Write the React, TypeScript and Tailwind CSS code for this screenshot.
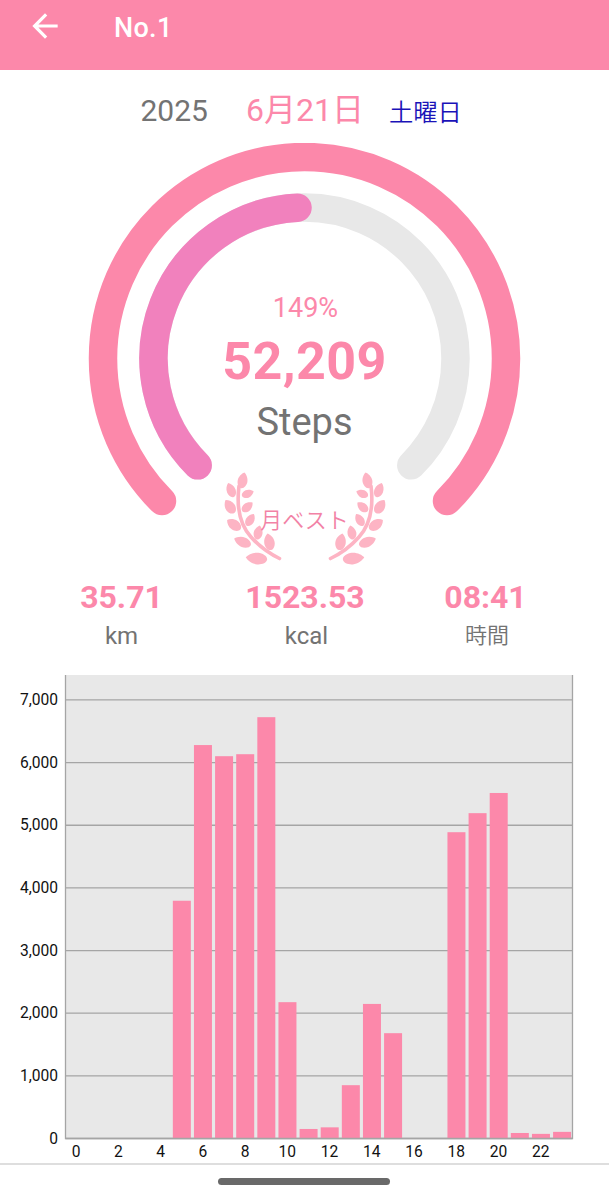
import { ReactNode } from 'react';

interface Stat {
    value: string;
    unit: string;
    className: string;
    unitClassName: string;
}

const HOURLY_STEPS = [
    0, 0, 0, 0, 0, 3795, 6280, 6102, 6134, 6725, 2176, 152,
    178, 851, 2148, 1681, 0, 0, 4889, 5193, 5515, 88, 74, 106
];

const STATS: Stat[] = [
    { value: '35.71', unit: 'km', className: 'w-[183px]', unitClassName: 'text-[24px]' },
    { value: '1523.53', unit: 'kcal', className: 'w-[184px]', unitClassName: 'pl-[3px] text-[24px]' },
    { value: '08:41', unit: '時間', className: 'w-[177px]', unitClassName: 'pl-[3px] text-[22px] font-[350]' }
];

// [cx, cy, half width, half length, rotation]
const LEAVES = [
    [32.7, 20.5, 4.9, 7.8, 12],
    [21, 30.2, 4.5, 7.3, -22],
    [37.7, 33.7, 4, 6.1, 68],
    [20, 46.7, 5, 7.6, -34],
    [37.3, 47, 4.2, 6.5, 50],
    [24, 64.7, 5.1, 8, -55],
    [40.2, 60, 4.2, 6.7, 32],
    [32.7, 82, 5, 8.7, -68],
    [48.2, 72.6, 4.4, 7, 12],
    [46.7, 98.5, 5.9, 10.5, -84],
    [59.3, 82, 5.2, 8.2, -12]
];

export default function App() {
    return (
        <div className="flex h-[1200px] w-[609px] flex-col overflow-hidden bg-white font-[Roboto,'Noto_Sans_CJK_JP',sans-serif]">
            <Header title="No.1" />
            <DateRow />
            <Gauge>
                <span className="mt-[149px] pl-[2px] text-[27px] leading-8 text-[#fc88aa]">149%</span>
                <span className="mt-[8px] text-[52px] leading-[60px] font-bold tracking-[0.4px] text-[#fc88aa]">52,209</span>
                <span className="mt-[6px] text-[38px] leading-12 text-[#737373]">Steps</span>
                <BestBadge />
            </Gauge>
            <div className="flex h-[100px] pt-[5px] pl-[30px]">
                {STATS.map(stat => <StatItem key={stat.unit} {...stat} />)}
            </div>
            <StepsChart />
            <div className="flex h-[37px] justify-center border-t-2 border-[#dedede] pt-[13px] pr-px">
                <div className="h-[7px] w-[172px] rounded-full bg-[#696969]" />
            </div>
        </div>
    );
}

function Header({ title }: { title: string }) {
    return (
        <header className="flex h-[70px] shrink-0 bg-[#fc88aa] pt-[7px] pl-[26px] text-white">
            <svg width="38" height="38" viewBox="0 0 24 24" fill="currentColor">
                <path d="M20 11H7.83l5.59-5.59L12 4l-8 8 8 8 1.41-1.41L7.83 13H20v-2z" />
            </svg>
            <h1 className="mt-[4px] ml-[50px] text-[27px] leading-[34px] font-medium tracking-[0.3px]">{title}</h1>
        </header>
    );
}

function DateRow() {
    return (
        <div className="flex h-[73px] shrink-0 items-baseline pt-[16px] pl-[140.5px]">
            <span className="w-[105.5px] text-[30px] leading-12 text-[#737373]">2025</span>
            <span className="w-[143px] text-[32px] leading-12 text-[#fc88aa]">6月21日</span>
            <span className="text-[24.3px] leading-12 font-[350] text-[#1a12b8]">土曜日</span>
        </div>
    );
}

function Gauge({ children }: { children: ReactNode }) {
    return (
        <div className="relative h-[431px] shrink-0">
            <svg className="absolute inset-0" width="609" height="431" fill="none" strokeWidth="28.5" strokeLinecap="round">
                <path d="M162 358A201.5 201.5 0 1 1 447 358" stroke="#fc88aa" />
                <path d="M197.7 322.3A151 151 0 1 1 411.3 322.3" stroke="#e8e8e8" />
                <path d="M197.7 322.3A151 151 0 0 1 297.5 64.7" stroke="#f181bd" />
            </svg>
            <div className="relative flex flex-col items-center">{children}</div>
        </div>
    );
}

function BestBadge() {
    return (
        <div className="relative mt-[14px] flex h-[110px] w-[190px] justify-center">
            <svg className="absolute inset-0" width="190" height="110" viewBox="0 0 190 110">
                <Laurel />
                <g transform="translate(190 0) scale(-1 1)"><Laurel /></g>
            </svg>
            <span className="relative mt-[45px] text-[22px] leading-8 font-[350] text-[#f282a6]">月ベスト</span>
        </div>
    );
}

function Laurel() {
    return (
        <g fill="#fdb4c4">
            <path d="M29 26C26 50 31 66 41 77C49 86 58 93 69.5 98.5" fill="none" stroke="#fdb4c4" strokeWidth="3.6" strokeLinecap="round" />
            {LEAVES.map(([cx, cy, w, h, angle]) => (
                <path
                    key={`${cx}-${cy}`}
                    d="M0 1C-.6 1 -1 .5 -1 .1C-1 -.4 -.5 -.85 0 -1.05C.5 -.85 1 -.4 1 .1C1 .5 .6 1 0 1Z"
                    transform={`translate(${cx} ${cy}) rotate(${angle}) scale(${w} ${h})`}
                />
            ))}
        </g>
    );
}

function StatItem({ value, unit, className, unitClassName }: Stat) {
    return (
        <div className={`flex flex-col items-center ${className}`}>
            <span className="text-[32px] leading-[36px] font-bold text-[#fc88aa]">{value}</span>
            <span className={`mt-[2px] leading-[38px] text-[#737373] ${unitClassName}`}>{unit}</span>
        </div>
    );
}

function StepsChart() {
    const left = 65.5;
    const bottom = 464.5;
    const slot = 507 / 24;
    const yOf = (steps: number) => bottom - steps * 0.06265;

    return (
        <svg className="shrink-0" width="609" height="489" fontSize="15.6" fill="#111">
            <rect x={left} y="1" width="507" height={bottom - 1} fill="#e8e8e8" />
            {[0, 1000, 2000, 3000, 4000, 5000, 6000, 7000].map(value => (
                <g key={value}>
                    <path d={`M${left} ${yOf(value)}H572.5`} stroke="#a5a5a5" strokeWidth="1.3" />
                    <text x="58" y={yOf(value) + 5} textAnchor="end">{value.toLocaleString('en-US')}</text>
                </g>
            ))}
            {HOURLY_STEPS.map((steps, hour) => (
                <g key={hour}>
                    {steps > 0 && (
                        <rect x={left + hour * slot + 1.7} y={yOf(steps)} width="18" height={bottom - yOf(steps)} fill="#fc88aa" />
                    )}
                    {hour % 2 === 0 && (
                        <text x={left + hour * slot + slot / 2} y="482.5" textAnchor="middle">{hour}</text>
                    )}
                </g>
            ))}
            <path d={`M${left} 1V${bottom}H572.5V1`} fill="none" stroke="#a5a5a5" strokeWidth="1.3" />
        </svg>
    );
}
